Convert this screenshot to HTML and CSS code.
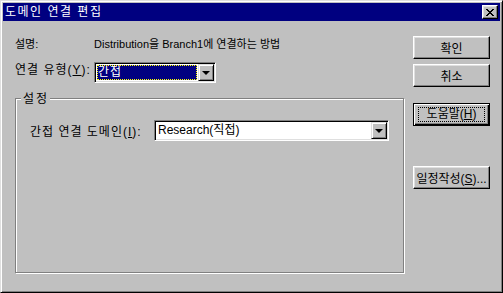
FILE: index.html
```html
<!DOCTYPE html>
<html>
<head>
  <title>도메인 연결 편집</title>
  <link rel="stylesheet" href="styles.css">
</head>
<body>
  <div class="window">
    <div class="titlebar">
      <span class="title">도메인 연결 편집</span>
      <button class="close" type="button">
        <svg width="8" height="7" viewBox="0 0 8 7">
          <path d="M0 0h2v1h1v1h2v-1h1v-1h2v1h-1v1h-1v1h-1v1h1v1h1v1h1v1h-2v-1h-1v-1h-2v1h-1v1h-2v-1h1v-1h1v-1h1v-1h-1v-1h-1v-1h-1z" fill="#000"/>
        </svg>
      </button>
    </div>

    <div class="content">
      <div class="main">
        <div class="row desc">
          <span class="label">설명:</span>
          <span>Distribution을 Branch1에 연결하는 방법</span>
        </div>

        <div class="row">
          <span class="label label-spaced">연결 유형(<u>Y</u>):</span>
          <div class="combo combo-type">
            <span class="combo-value selected">간접</span>
            <span class="drop"><span class="arrow"></span></span>
          </div>
        </div>

        <div class="group">
          <div class="group-title">설정</div>
          <div class="row group-row">
            <span class="label label-spaced label-wide">간접 연결 도메인(<u>I</u>):</span>
            <div class="combo combo-domain">
              <span class="combo-value">Research(직접)</span>
              <span class="drop"><span class="arrow"></span></span>
            </div>
          </div>
        </div>
      </div>

      <div class="buttons">
        <button class="btn" type="button">확인</button>
        <button class="btn" type="button">취소</button>
        <button class="btn btn-default" type="button"><span class="focus">도움말(<u>H</u>)</span></button>
        <button class="btn btn-schedule" type="button">일정작성(<u>S</u>)...</button>
      </div>
    </div>
  </div>
</body>
</html>
```

FILE: styles.css
```css
/* dialog styles */
body {
  margin: 0;
  font-family: "Liberation Sans", "Noto Sans CJK KR", sans-serif;
  font-size: 11px;
  color: #000;
  background-color: #c0c0c0;
}

.window {
  width: 503px;
  height: 293px;
  box-sizing: border-box;
  padding: 2px;
  background-color: #c0c0c0;
  border: 1px solid;
  border-color: #dfdfdf #000 #000 #dfdfdf;
  box-shadow: inset 1px 1px 0 #fff, inset -1px -1px 0 #808080;
}

.titlebar {
  display: flex;
  align-items: center;
  justify-content: space-between;
  height: 18px;
  padding: 0 2px 0 2px;
  background-color: #000080;
  color: #fff;
}

.title {
  font-size: 12px;
  letter-spacing: 1.5px;
  line-height: 18px;
}

.close {
  display: flex;
  align-items: center;
  justify-content: center;
  width: 16px;
  height: 14px;
  padding: 0;
  background-color: #c0c0c0;
  border: 1px solid;
  border-color: #fff #000 #000 #fff;
  box-shadow: inset -1px -1px 0 #808080, inset 1px 1px 0 #dfdfdf;
}

.content {
  display: flex;
  padding: 12px 0 0 12px;
}

.main {
  width: 389px;
}

.row {
  display: flex;
  align-items: center;
}

.desc {
  height: 20px;
}

.label {
  width: 79px;
  flex: none;
}

.label-spaced {
  font-size: 12px;
  letter-spacing: 1px;
}

.label-wide {
  width: 124px;
}

.combo {
  display: flex;
  box-sizing: border-box;
  height: 21px;
  padding: 1px;
  background-color: #fff;
  border: 1px solid;
  border-color: #808080 #fff #fff #808080;
  box-shadow: inset 1px 1px 0 #000, inset -1px -1px 0 #dfdfdf;
}

.combo-type {
  width: 122px;
  margin-top: 9px;
}

.combo-domain {
  width: 236px;
}

.combo-value {
  flex: 1;
  padding-left: 2px;
  line-height: 17px;
  font-size: 12px;
}

.selected {
  margin: 1px;
  padding-left: 1px;
  line-height: 15px;
  letter-spacing: 1px;
  background-color: #000080;
  color: #fff;
  outline: 1px dotted #ffff00;
  outline-offset: -1px;
}

.drop {
  display: flex;
  align-items: center;
  justify-content: center;
  box-sizing: border-box;
  width: 16px;
  height: 17px;
  background-color: #c0c0c0;
  border: 1px solid;
  border-color: #dfdfdf #000 #000 #dfdfdf;
  box-shadow: inset 1px 1px 0 #fff, inset -1px -1px 0 #808080;
}

.arrow {
  width: 0;
  height: 0;
  border-left: 4px solid transparent;
  border-right: 4px solid transparent;
  border-top: 4px solid #000;
}

.group {
  box-sizing: border-box;
  height: 175px;
  margin-top: 15px;
  padding: 0 14px;
  border: 1px solid #808080;
  box-shadow: 1px 1px 0 #fff, inset 1px 1px 0 #fff;
}

.group-title {
  width: max-content;
  margin: -7px 0 0 -9px;
  padding: 0 1px 0 2px;
  line-height: 14px;
  font-size: 12px;
  letter-spacing: 2px;
  background-color: #c0c0c0;
}

.group-row {
  margin-top: 14px;
}

.buttons {
  display: flex;
  flex-direction: column;
  margin: 3px 0 0 9px;
}

.btn {
  width: 77px;
  height: 23px;
  padding: 0;
  margin-bottom: 5px;
  font-family: inherit;
  font-size: 12px;
  color: #000;
  background-color: #c0c0c0;
  border: 1px solid;
  border-color: #fff #000 #000 #fff;
  box-shadow: inset -1px -1px 0 #808080, inset 1px 1px 0 #dfdfdf;
}

.btn-default {
  margin-top: 11px;
  display: flex;
  align-items: center;
  justify-content: center;
  border-color: #000;
  box-shadow: inset 1px 1px 0 #fff, inset -1px -1px 0 #000, inset -2px -2px 0 #808080;
}

.focus {
  display: block;
  width: 65px;
  line-height: 13px;
  border: 1px dotted #000;
}

.btn-schedule {
  margin-top: 35px;
}
```
